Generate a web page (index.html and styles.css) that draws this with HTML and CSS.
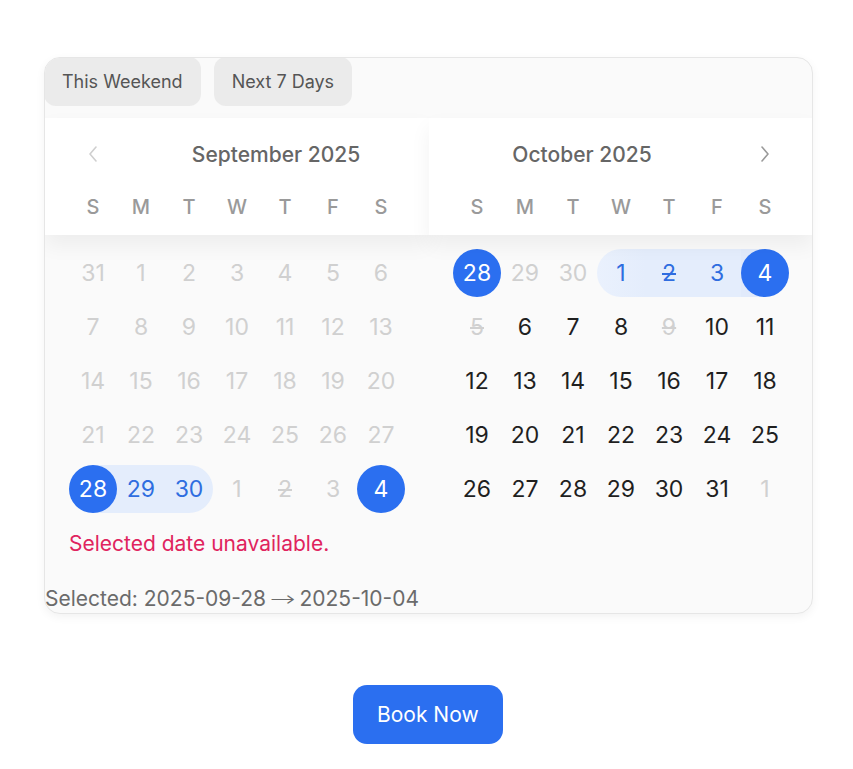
FILE: index.html
```html
<!DOCTYPE html>
<html lang="en">
<head>
<meta charset="utf-8">
<title>Date range picker</title>
<link rel="stylesheet" href="styles.css">
</head>
<body>
<div class="page">
  <div class="card">
    <div class="presets">
      <button class="preset">This Weekend</button>
      <button class="preset">Next 7 Days</button>
    </div>
    <div class="months">
      <section class="month">
        <div class="month-head">
          <div class="title-row">
            <div class="nav nav-prev"><svg width="10" height="18" viewBox="0 0 10 18"><path d="M8 2 L2 9 L8 16" fill="none" stroke="#cfcfcf" stroke-width="1.6" stroke-linecap="round" stroke-linejoin="round"/></svg></div>
            <div class="title">September 2025</div>
          </div>
          <div class="weekdays"><span>S</span><span>M</span><span>T</span><span>W</span><span>T</span><span>F</span><span>S</span></div>
        </div>
        <div class="days">
          <span class="day off">31</span><span class="day off">1</span><span class="day off">2</span><span class="day off">3</span><span class="day off">4</span><span class="day off">5</span><span class="day off">6</span>
          <span class="day off">7</span><span class="day off">8</span><span class="day off">9</span><span class="day off">10</span><span class="day off">11</span><span class="day off">12</span><span class="day off">13</span>
          <span class="day off">14</span><span class="day off">15</span><span class="day off">16</span><span class="day off">17</span><span class="day off">18</span><span class="day off">19</span><span class="day off">20</span>
          <span class="day off">21</span><span class="day off">22</span><span class="day off">23</span><span class="day off">24</span><span class="day off">25</span><span class="day off">26</span><span class="day off">27</span>
          <span class="day sel half-right"><span class="dot">28</span></span><span class="day range">29</span><span class="day range round-r">30</span><span class="day off">1</span><span class="day off strike">2</span><span class="day off">3</span><span class="day sel"><span class="dot">4</span></span>
        </div>
      </section>
      <section class="month">
        <div class="month-head">
          <div class="title-row">
            <div class="title">October 2025</div>
            <div class="nav nav-next"><svg width="10" height="18" viewBox="0 0 10 18"><path d="M2 2 L8 9 L2 16" fill="none" stroke="#9a9a9a" stroke-width="1.6" stroke-linecap="round" stroke-linejoin="round"/></svg></div>
          </div>
          <div class="weekdays"><span>S</span><span>M</span><span>T</span><span>W</span><span>T</span><span>F</span><span>S</span></div>
        </div>
        <div class="days">
          <span class="day sel"><span class="dot">28</span></span><span class="day off">29</span><span class="day off">30</span><span class="day range round-l">1</span><span class="day range strike">2</span><span class="day range">3</span><span class="day sel half-left"><span class="dot">4</span></span>
          <span class="day off strike">5</span><span class="day">6</span><span class="day">7</span><span class="day">8</span><span class="day off strike">9</span><span class="day">10</span><span class="day">11</span>
          <span class="day">12</span><span class="day">13</span><span class="day">14</span><span class="day">15</span><span class="day">16</span><span class="day">17</span><span class="day">18</span>
          <span class="day">19</span><span class="day">20</span><span class="day">21</span><span class="day">22</span><span class="day">23</span><span class="day">24</span><span class="day">25</span>
          <span class="day">26</span><span class="day">27</span><span class="day">28</span><span class="day">29</span><span class="day">30</span><span class="day">31</span><span class="day off">1</span>
        </div>
      </section>
    </div>
    <p class="error">Selected date unavailable.</p>
    <p class="summary">Selected: 2025-09-28 <span class="arrow">→</span> 2025-10-04</p>
  </div>
  <button class="book">Book Now</button>
</div>
</body>
</html>
```

FILE: styles.css
```css
* { box-sizing: border-box; }
html, body { margin: 0; padding: 0; background: #ffffff; }
body { font-family: Inter, "Noto Sans", "Liberation Sans", sans-serif; color: #222; }

.page {
  display: flex;
  flex-direction: column;
  align-items: flex-start;
  padding: 57px 0 0 44px;
}

.card {
  width: 769px;
  background: #fafafa;
  border: 1px solid #e6e6e6;
  border-radius: 16px;
  box-shadow: 0 3px 10px rgba(0, 0, 0, 0.05);
  overflow: hidden;
  padding-bottom: 2px;
}

.presets {
  display: flex;
  gap: 13px;
  margin: -1px 0 0 -1px;
}
.preset {
  height: 49px;
  padding: 0 18px;
  border: none;
  border-radius: 12px;
  background: #ebebeb;
  color: #555;
  font-family: inherit;
  font-size: 18px;
}

.months {
  display: flex;
  margin-top: 12px;
}
.month { width: 384px; }

.month-head {
  background: #ffffff;
  padding: 12px 24px 16px;
  box-shadow: 0 10px 20px rgba(0, 0, 0, 0.055);
  position: relative;
  z-index: 1;
}
.title-row {
  display: flex;
  align-items: center;
  height: 48px;
}
.title {
  flex: 1;
  text-align: center;
  font-size: 21px;
  font-weight: 500;
  color: #666;
}
.nav {
  width: 78px;
  height: 48px;
  display: flex;
  align-items: center;
}
.nav-prev { justify-content: flex-start; padding-left: 19px; }
.nav-next { justify-content: flex-end; padding-right: 19px; }

.weekdays {
  margin-top: 17px;
  display: grid;
  grid-template-columns: repeat(7, 48px);
  height: 24px;
  align-items: center;
}
.weekdays span {
  text-align: center;
  font-size: 20px;
  font-weight: 500;
  color: #9a9a9a;
}

.days {
  display: grid;
  grid-template-columns: repeat(7, 48px);
  grid-auto-rows: 48px;
  row-gap: 6px;
  padding: 14px 24px 0;
}
.day {
  display: flex;
  align-items: center;
  justify-content: center;
  font-size: 23px;
  color: #1f1f1f;
}
.day.off { color: #d0d0d0; }
.day.strike { text-decoration: line-through; text-decoration-thickness: 1.5px; }
.day.range { background: #e4edfc; color: #2f6de0; }
.day.round-l { border-radius: 24px 0 0 24px; background: linear-gradient(to right, #eaf1fd, #e4edfc); }
.day.round-r { border-radius: 0 24px 24px 0; }
.day.half-right { background: linear-gradient(to right, transparent 50%, #e4edfc 50%); }
.day.half-left { background: linear-gradient(to right, #e1eafb 50%, transparent 50%); }
.dot {
  width: 48px;
  height: 48px;
  border-radius: 50%;
  background: #2b6ff0;
  color: #ffffff;
  display: flex;
  align-items: center;
  justify-content: center;
}

.error {
  margin: 19px 0 0 24px;
  font-size: 21px;
  line-height: 24px;
  color: #e0245e;
}
.summary {
  margin: 31px 0 0 0;
  height: 24px;
  font-size: 21px;
  line-height: 24px;
  color: #6b6b6b;
}
.arrow {
  display: inline-block;
  font-family: "Noto Sans", "DejaVu Sans", sans-serif;
  font-weight: 300;
  line-height: 20px;
  margin: 0 2px;
  transform: scaleX(1.45);
}

.book {
  margin: 71px 0 0 309px;
  height: 59px;
  padding: 0 24px;
  border: none;
  border-radius: 14px;
  background: #2b6ff0;
  color: #ffffff;
  font-family: inherit;
  font-size: 21px;
}
```
